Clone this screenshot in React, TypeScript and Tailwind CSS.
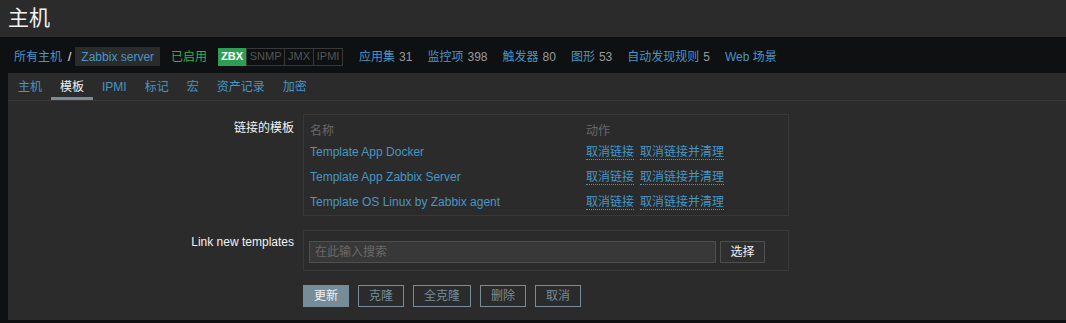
import React from "react";

const font = { fontFamily: '"Liberation Sans", "Noto Sans CJK SC", Arial, sans-serif' };

function NavItem({ label, count }: { label: string; count?: string }) {
  return (
    <span className="whitespace-nowrap">
      <span className="text-[#4796c4]">{label}</span>
      {count && <span className="text-[#9a9a9a] ml-[4px]">{count}</span>}
    </span>
  );
}

const tabs = ["主机", "模板", "IPMI", "标记", "宏", "资产记录", "加密"];

const templates = [
  "Template App Docker",
  "Template App Zabbix Server",
  "Template OS Linux by Zabbix agent",
];

export default function App() {
  return (
    <div
      className="w-[1066px] h-[323px] bg-[#0e1012] text-[12px] text-[#f2f2f2] overflow-hidden flex flex-col"
      style={font}
    >
      {/* Title */}
      <div className="h-[37px] bg-[#2b2b2b] flex items-center px-[8px] shrink-0">
        <h1 className="text-[21px] leading-none text-[#f2f2f2] mt-[-3px]">主机</h1>
      </div>

      {/* Breadcrumb nav */}
      <div className="h-[36px] flex items-center pl-[14px] pt-[3px] shrink-0">
        <span className="text-[#4796c4]">所有主机</span>
        <span className="text-[#f2f2f2] ml-[6px] mr-[4px]">/</span>
        <span className="bg-[#2b2b2b] text-[#4796c4] h-[19px] px-[6px] flex items-center">
          Zabbix server
        </span>
        <span className="text-[#2fb456] ml-[11px]">已启用</span>
        <div className="flex ml-[11px] h-[18px] text-[11px]">
          <span className="bg-[#2f9e55] text-white font-bold w-[28px] justify-center flex items-center">ZBX</span>
          <span className="border border-[#383838] text-[#555] w-[39px] justify-center flex items-center">SNMP</span>
          <span className="border border-l-0 border-[#383838] text-[#555] w-[29px] justify-center flex items-center">JMX</span>
          <span className="border border-l-0 border-[#383838] text-[#555] w-[29px] justify-center flex items-center">IPMI</span>
        </div>
        <div className="flex gap-[15px] ml-[16px]">
          <NavItem label="应用集" count="31" />
          <NavItem label="监控项" count="398" />
          <NavItem label="触发器" count="80" />
          <NavItem label="图形" count="53" />
          <NavItem label="自动发现规则" count="5" />
          <NavItem label="Web 场景" />
        </div>
      </div>

      {/* Content panel */}
      <div className="ml-[8px] bg-[#2b2b2b] h-[247px] flex flex-col shrink-0">
        {/* Tabs */}
        <div className="h-[28px] flex pl-[1px] border-b border-[#383838] shrink-0">
          {tabs.map((t, i) => (
            <div
              key={t}
              className={
                i === 1
                  ? "px-[9px] flex items-center text-[#f2f2f2] border-b-[3px] border-[#768d99] pt-[4px]"
                  : "px-[9px] flex items-center text-[#4796c4] pt-[1px]"
              }
            >
              {t}
            </div>
          ))}
        </div>

        {/* Form */}
        <div className="flex flex-col pt-[13px]">
          {/* Linked templates */}
          <div className="flex">
            <div className="w-[286px] text-right pt-[5px] text-[#f2f2f2]">链接的模板</div>
            <div className="ml-[9px] w-[486px] h-[102px] border border-[#383838] px-[6px] pt-[8px]">
              <div className="flex text-[#686868] h-[16px] items-center">
                <div className="w-[276px]">名称</div>
                <div>动作</div>
              </div>
              {templates.map((t) => (
                <div key={t} className="flex h-[25px] items-center">
                  <div className="w-[276px] text-[#4796c4]">{t}</div>
                  <div className="flex gap-[6px] text-[#4796c4] pt-[2px]">
                    <span className="border-b border-dotted border-[#4796c4] leading-[14px]">取消链接</span>
                    <span className="border-b border-dotted border-[#4796c4] leading-[14px]">取消链接并清理</span>
                  </div>
                </div>
              ))}
            </div>
          </div>

          {/* Link new templates */}
          <div className="flex mt-[14px]">
            <div className="w-[286px] text-right pt-[3px] text-[#f2f2f2]">Link new templates</div>
            <div className="ml-[9px] w-[486px] h-[41px] border border-[#383838] pl-[5px] pt-[10px] flex items-start">
              <div className="w-[407px] h-[22px] bg-[#383838] border border-[#4f4f4f] flex items-center px-[5px] text-[#686868]">
                在此输入搜索
              </div>
              <div className="ml-[4px] w-[45px] h-[22px] border border-[#4f4f4f] bg-[#2f2f2f] flex items-center justify-center text-[#f2f2f2]">
                选择
              </div>
            </div>
          </div>

          {/* Buttons */}
          <div className="flex ml-[295px] mt-[14px] gap-[9px]">
            <div className="h-[22px] w-[46px] bg-[#768d99] text-[#f2f2f2] flex items-center justify-center">更新</div>
            <div className="h-[22px] w-[46px] border border-[#768d99] text-[#768d99] flex items-center justify-center">克隆</div>
            <div className="h-[22px] w-[58px] border border-[#768d99] text-[#768d99] flex items-center justify-center">全克隆</div>
            <div className="h-[22px] w-[46px] border border-[#768d99] text-[#768d99] flex items-center justify-center">删除</div>
            <div className="h-[22px] w-[46px] border border-[#768d99] text-[#768d99] flex items-center justify-center">取消</div>
          </div>
        </div>
      </div>
    </div>
  );
}
